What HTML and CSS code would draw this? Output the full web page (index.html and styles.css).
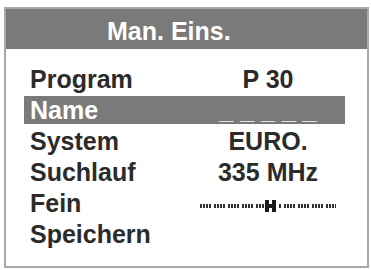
FILE: index.html
```html
<!DOCTYPE html>
<html lang="de">
<head>
<meta charset="utf-8">
<title>Man. Eins.</title>
<link rel="stylesheet" href="styles.css">
</head>
<body>
<div class="osd">
  <div class="osd-header">Man. Eins.</div>
  <div class="osd-rows">
    <div class="row"><span class="label">Program</span><span class="value">P 30</span></div>
    <div class="row selected"><span class="label">Name</span><span class="value name-value">_ _ _ _ _</span></div>
    <div class="row"><span class="label">System</span><span class="value">EURO.</span></div>
    <div class="row"><span class="label">Suchlauf</span><span class="value">335 MHz</span></div>
    <div class="row"><span class="label">Fein</span><span class="value">
      <svg class="slider" width="140" height="14" viewBox="0 0 140 14" aria-hidden="true">
        <defs>
          <pattern id="ticks" x="2" y="0" width="14" height="14" patternUnits="userSpaceOnUse">
            <rect x="0" y="6" width="2" height="4" fill="#333333"/>
            <rect x="3" y="6" width="2" height="4" fill="#333333"/>
            <rect x="6" y="6" width="2" height="4" fill="#333333"/>
            <rect x="9" y="6" width="2" height="4" fill="#333333"/>
          </pattern>
        </defs>
        <rect x="2" y="0" width="64" height="14" fill="url(#ticks)"/>
        <rect x="80" y="0" width="58" height="14" fill="url(#ticks)"/>
        <rect x="67" y="2" width="4" height="12" fill="#1a1a1a"/>
        <rect x="74" y="2" width="4" height="12" fill="#1a1a1a"/>
        <rect x="70" y="6" width="5" height="4" fill="#1a1a1a"/>
      </svg>
    </span></div>
    <div class="row"><span class="label">Speichern</span><span class="value"></span></div>
  </div>
</div>
</body>
</html>
```
FILE: styles.css
```css
html, body {
  margin: 0;
  padding: 0;
  background: #ffffff;
}

body {
  font-family: "Liberation Sans", Arial, sans-serif;
  font-weight: bold;
  color: #2b2b2b;
}

.osd {
  box-sizing: border-box;
  width: 365px;
  height: 261px;
  margin: 7px 0 0 4px;
  border: 2px solid #a9a9a9;
  background: #ffffff;
  display: flex;
  flex-direction: column;
}

.osd-header {
  height: 40px;
  line-height: 40px;
  padding: 2px 0 0 101px;
  box-sizing: border-box;
  background: #7a7a7a;
  color: #ffffff;
  font-size: 25px;
}

.osd-rows {
  display: flex;
  flex-direction: column;
  gap: 3px;
  padding: 16px 0 0 18px;
}

.row {
  display: grid;
  grid-template-columns: 167px 154px;
  width: 321px;
  height: 28px;
  line-height: 28px;
  font-size: 25px;
}

.label {
  padding-left: 6px;
}

.value {
  text-align: center;
}

.selected {
  background: #7a7a7a;
  color: #ffffff;
}

.name-value {
  color: #e2e2e2;
}

.slider {
  display: inline-block;
  vertical-align: middle;
  margin-top: 0;
}
```
